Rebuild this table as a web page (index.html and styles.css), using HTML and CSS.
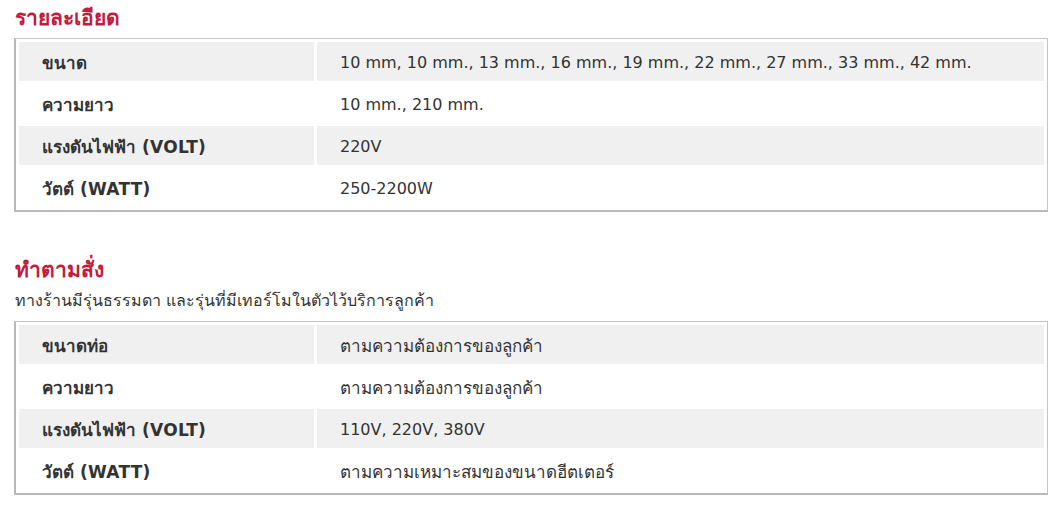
FILE: index.html
```html
<!DOCTYPE html>
<html lang="th">
<head>
<meta charset="utf-8">
<title>รายละเอียด</title>
<link rel="stylesheet" href="styles.css">
</head>
<body>
<section class="block">
  <h2 class="title">รายละเอียด</h2>
  <table class="spec">
    <tr class="odd"><th>ขนาด</th><td class="en">10 mm, 10 mm., 13 mm., 16 mm., 19 mm., 22 mm., 27 mm., 33 mm., 42 mm.</td></tr>
    <tr><th>ความยาว</th><td class="en">10 mm., 210 mm.</td></tr>
    <tr class="odd"><th>แรงดันไฟฟ้า <span class="en">(VOLT)</span></th><td class="en">220V</td></tr>
    <tr><th>วัตต์ <span class="en">(WATT)</span></th><td class="en">250-2200W</td></tr>
  </table>
</section>
<section class="block second">
  <h2 class="title">ทำตามสั่ง</h2>
  <p class="desc">ทางร้านมีรุ่นธรรมดา และรุ่นที่มีเทอร์โมในตัวไว้บริการลูกค้า</p>
  <table class="spec">
    <tr class="odd"><th>ขนาดท่อ</th><td>ตามความต้องการของลูกค้า</td></tr>
    <tr><th>ความยาว</th><td>ตามความต้องการของลูกค้า</td></tr>
    <tr class="odd"><th>แรงดันไฟฟ้า <span class="en">(VOLT)</span></th><td class="en">110V, 220V, 380V</td></tr>
    <tr><th>วัตต์ <span class="en">(WATT)</span></th><td>ตามความเหมาะสมของขนาดฮีตเตอร์</td></tr>
  </table>
</section>
</body>
</html>
```
FILE: styles.css
```css
html, body { margin: 0; padding: 0; background: #fff; }
body {
  font-family: "DejaVu Sans", "Noto Sans", sans-serif;
  color: #333;
  font-size: 17px;
  padding: 0 16px 0 14px;
}
.en { font-size: 16px; }
.block { display: flex; flex-direction: column; }
.title {
  margin: 0;
  padding-top: 6px;
  height: 38px;
  box-sizing: border-box;
  font-size: 21px;
  font-weight: bold;
  color: #c41a3c;
  line-height: 24px;
  padding-left: 1px;
}
.second { margin-top: 40px; }
.second .title { height: 39px; }
.desc {
  margin: 0;
  height: 30px;
  line-height: 20px;
  font-size: 16px;
  padding-left: 1px;
}
.spec {
  width: 100%;
  border-collapse: separate;
  border-spacing: 3px;
  border-top: 1px solid #c4c4c4;
  border-right: 1px solid #c4c4c4;
  border-left: 2px solid #b9b9b9;
  border-bottom: 2px solid #b9b9b9;
}
.spec th, .spec td {
  height: 37px;
  padding: 2px 0 0 23px;
  text-align: left;
  vertical-align: middle;
  line-height: 20px;
}
.spec th {
  width: 272px;
  font-weight: bold;
  color: #333;
}
.spec th .en { font-size: 17px; letter-spacing: 0.3px; }
.odd th, .odd td { background: #f0f0f0; }
```
